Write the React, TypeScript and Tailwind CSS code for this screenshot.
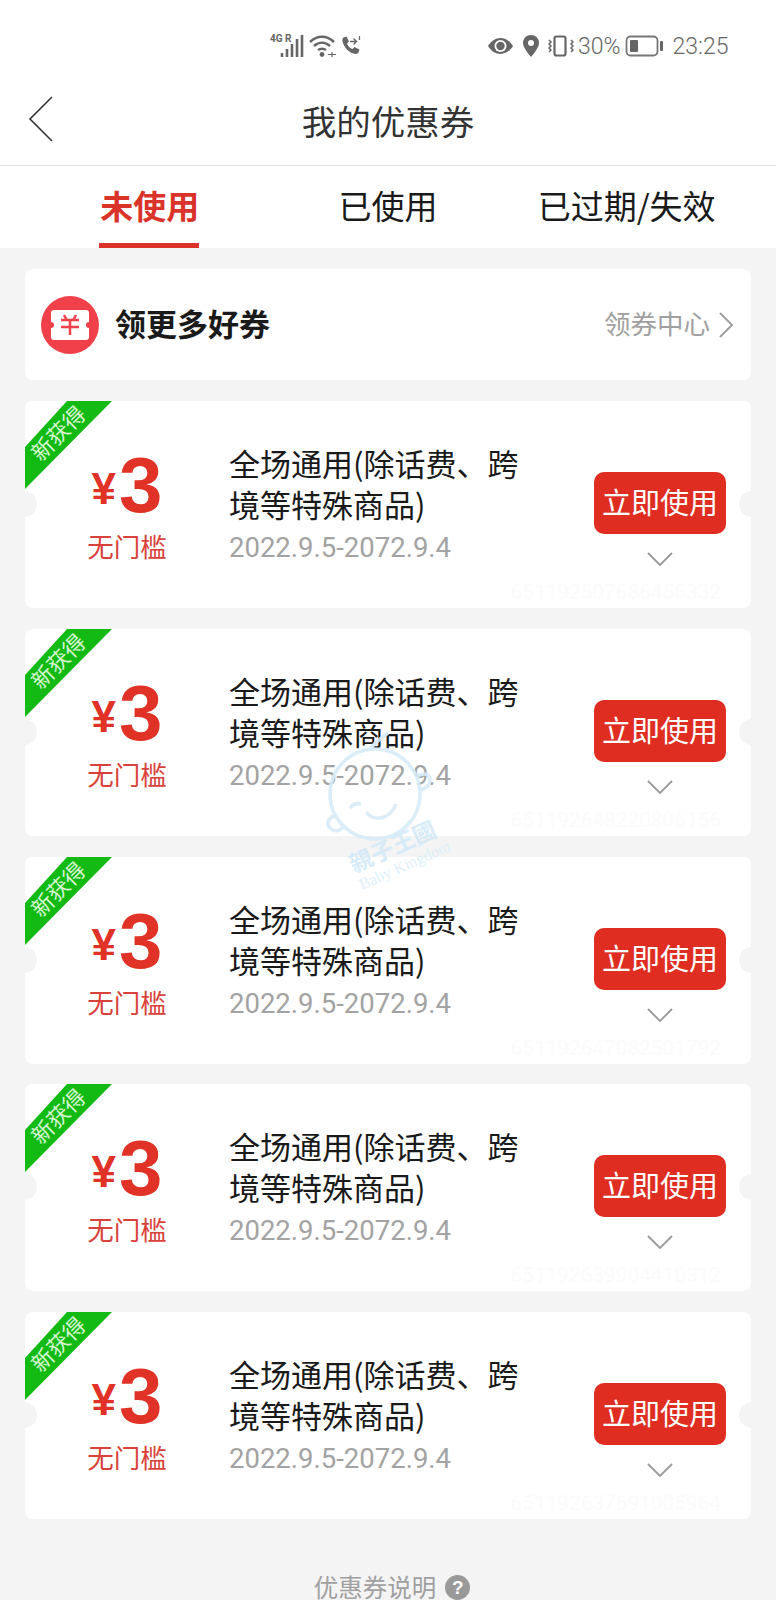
import React from "react";

const CJK = '"Noto Sans CJK SC", "Noto Sans", sans-serif';

function StatusIcons() {
  return (
    <div className="flex h-[80px] items-center pl-[269px] pt-[12px] text-[#666666]">
      <div className="relative h-[24px] w-[35px]">
        <span className="absolute left-[1px] top-[-1px] text-[10px] font-bold leading-[12px]" style={{ fontFamily: "Roboto, sans-serif" }}>
          4G R
        </span>
        <svg width="36" height="24" viewBox="0 0 36 24" className="absolute left-0 top-0">
          <path d="M13 19v4M18 15v8M23 10v13M28 5v18M33 1v22" stroke="#666" strokeWidth="2.600" fill="none" />
        </svg>
      </div>
      <svg width="28" height="24" viewBox="0 0 28 24" className="ml-[5px]" fill="none" stroke="#666" strokeWidth="2.500">
        <path d="M1 8c7-7 17-7 24 0M5 12c5-4.500 11-4.500 16 0M9 16c3-2 5-2 8 0" />
        <circle cx="13" cy="20.500" r="2.400" fill="#666" stroke="none" />
        <path d="M19 20.500h8M23 18v5" strokeWidth="1.200" />
      </svg>
      <svg width="20" height="22" viewBox="0 0 20 22" className="ml-[4px]">
        <path d="M2.500 2.500l3-1 2.500 5-2 2c.8 2.500 3 4.800 5.500 5.500l2-2 5 2.500-1 3c-1 1.300-2.500 1.800-4 1.300C8 17.500 3 12.500 1.500 6.500c-.4-1.500 0-3 1-4z" fill="#666" />
        <path d="M9 6.500h6M12.500 3.500l3 3-3 3" stroke="#666" strokeWidth="1.400" fill="none" />
        <path d="M18.500 1v4" stroke="#666" strokeWidth="1.200" />
      </svg>
      <svg width="27" height="20" viewBox="0 0 27 20" className="ml-[126px]">
        <path d="M1 10c3-5 7.500-8 12.500-8S23 5 26 10c-3 5-7.500 8-12.500 8S4 15 1 10z" fill="#666" />
        <circle cx="13.500" cy="10" r="6" fill="#fff" />
        <circle cx="13.500" cy="10" r="4.200" fill="#666" />
      </svg>
      <svg width="18" height="24" viewBox="0 0 18 24" className="ml-[8px]">
        <path d="M9 1C4.500 1 1 4.500 1 9c0 5.500 8 14 8 14s8-8.500 8-14c0-4.500-3.500-8-8-8z" fill="#666" />
        <circle cx="9" cy="9" r="3" fill="#fff" />
      </svg>
      <svg width="27" height="24" viewBox="0 0 27 24" className="ml-[7px]" fill="none" stroke="#666">
        <rect x="7.500" y="2.500" width="11" height="19" rx="2" strokeWidth="2.200" />
        <path d="M2 6l2 2-2 2 2 2-2 2 2 2-2 2M24 6l2 2-2 2 2 2-2 2 2 2-2 2" strokeWidth="1.500" />
      </svg>
      <span className="ml-[4px] text-[23px] font-light leading-none" style={{ fontFamily: "Roboto, sans-serif" }}>
        30%
      </span>
      <svg width="38" height="24" viewBox="0 0 38 24" className="ml-[4px]" fill="none">
        <rect x="1.500" y="2.500" width="31" height="19" rx="4" stroke="#777" strokeWidth="1.800" />
        <rect x="5" y="6" width="8" height="12" rx="1" fill="#666" />
        <rect x="35" y="7" width="3" height="10" rx="1" fill="#666" />
      </svg>
      <span className="ml-[10px] text-[23px] font-light leading-none" style={{ fontFamily: "Roboto, sans-serif" }}>
        23:25
      </span>
    </div>
  );
}

function Coupon({ code }: { code: string }) {
  return (
    <div className="relative flex h-[207px] rounded-[8px] bg-white">
      <svg width="87" height="88" viewBox="0 0 87 88" className="absolute left-0 top-0">
        <polygon points="42,0 87,0 0,88 0,46" fill="#14ba14" />
      </svg>
      <span className="absolute left-[-1px] top-[20px] w-[66px] -rotate-45 whitespace-nowrap text-center text-[22px] leading-[22px] text-[#d5f5d0]">
        新获得
      </span>
      <div className="absolute left-[-14px] top-[90px] h-[26px] w-[26px] rounded-full bg-[#f4f4f4]" />
      <div className="absolute right-[-14px] top-[90px] h-[26px] w-[26px] rounded-full bg-[#f4f4f4]" />
      <div className="flex w-[204px] shrink-0 flex-col items-center pt-[38px] text-[#e03226]">
        <div className="flex h-[92px] items-center">
          <span className="mr-[3px] mt-[8px] text-[44px] font-bold leading-none" style={{ fontFamily: '"Liberation Sans", sans-serif' }}>
            ¥
          </span>
          <span className="text-[78px] font-bold leading-none" style={{ fontFamily: '"Liberation Sans", sans-serif' }}>
            3
          </span>
        </div>
        <span className="mt-[-3px] text-[26.500px] leading-[36px] text-[#d9423a]">无门槛</span>
      </div>
      <div className="w-[310px] shrink-0 pt-[41px]">
        <p className="text-[31px] leading-[41px] text-[#1a1a1a]">全场通用(除话费、跨境等特殊商品)</p>
        <p className="mt-[4px] text-[27.500px] leading-[40px] text-[#a3a3a3]" style={{ fontFamily: "Roboto, sans-serif" }}>
          2022.9.5-2072.9.4
        </p>
      </div>
      <div className="ml-[55px] flex w-[132px] shrink-0 flex-col items-center pt-[71px]">
        <div className="flex h-[62px] w-[132px] items-center justify-center rounded-[10px] bg-[#e02d22] pb-[3px] text-[29px] leading-none text-white">
          立即使用
        </div>
        <svg width="26" height="14" viewBox="0 0 26 14" className="mt-[18px]" fill="none" stroke="#9a9a9a" strokeWidth="1.800">
          <path d="M1 1l12 12L25 1" />
        </svg>
        <span className="mr-[5px] mt-[13px] self-end whitespace-nowrap text-[20.800px] leading-[26px] text-[#fbfbfb]" style={{ fontFamily: "Roboto, sans-serif" }}>
          {code}
        </span>
      </div>
    </div>
  );
}

function Watermark() {
  return (
    <svg width="150" height="170" viewBox="0 0 150 170" className="pointer-events-none absolute left-[318px] top-[730px] opacity-90" fill="none" stroke="#d7ecf8" strokeWidth="3.500">
      <circle cx="57" cy="64" r="45" />
      <path d="M48 82c8 10 24 8 30-8M32 78c3-4 7-5 11-4" />
      <path d="M52 19c4-6 10-10 18-16M100 46c6-4 12-2 12 4s-6 10-12 10M16 86c-6 2-8 8-4 12s10 4 14-2" />
      <text x="36" y="143" transform="rotate(-24 36 143)" fontSize="23" fontWeight="700" fill="#d3eaf8" stroke="none" style={{ fontFamily: CJK }}>
        親子王國
      </text>
      <text x="44" y="160" transform="rotate(-24 44 160)" fontSize="16" fill="#dceffa" stroke="none" style={{ fontFamily: '"Liberation Serif", serif' }}>
        Baby Kingdom
      </text>
    </svg>
  );
}

export default function App() {
  const codes = ["651192507686456332", "651192648220806156", "651192647082501792", "651192639904410312", "651192637691005964"];
  return (
    <div className="relative h-[1600px] w-[776px] overflow-hidden bg-[#f4f4f4]" style={{ fontFamily: CJK }}>
      <div className="bg-white">
        <StatusIcons />
        <div className="relative flex h-[86px] items-center justify-center border-b border-[#e2e2e2] pb-[5px]">
          <svg width="26" height="46" viewBox="0 0 26 46" className="absolute left-[28px] top-[16px]" fill="none" stroke="#333" strokeWidth="1.600">
            <path d="M24 1L2 23l22 22" />
          </svg>
          <span className="text-[34.500px] leading-none text-[#333333]">我的优惠券</span>
        </div>
        <div className="grid h-[82px] grid-cols-3 px-[30px] pb-[4px] text-[#1a1a1a]">
          <div className="relative flex items-center justify-center pl-[1px] text-[33px] font-bold leading-none text-[#d9332a]">
            未使用
            <div className="absolute bottom-[-4px] left-1/2 h-[5px] w-[100px] -translate-x-1/2 bg-[#d9332a]" />
          </div>
          <div className="flex items-center justify-center text-[33px] leading-none">已使用</div>
          <div className="flex items-center justify-center whitespace-nowrap text-[33px] leading-none">已过期/失效</div>
        </div>
      </div>
      <div className="flex flex-col px-[25px] pt-[21px]">
        <div className="flex h-[111px] items-center rounded-[8px] bg-white pl-[16px] pr-[17px]">
          <div className="flex h-[58px] w-[58px] items-center justify-center rounded-full bg-[#f0414a]">
            <svg width="40" height="32" viewBox="0 0 40 32">
              <path d="M4 1h32a3 3 0 0 1 3 3v9a3 3 0 0 0 0 6v9a3 3 0 0 1-3 3H4a3 3 0 0 1-3-3v-9a3 3 0 0 0 0-6V4a3 3 0 0 1 3-3z" fill="#fff" />
              <path d="M14 6l2.500 4.500M26 6l-2.500 4.500M11 11h18M11 18h18M20 11v15" stroke="#f0414a" strokeWidth="2.500" fill="none" />
            </svg>
          </div>
          <span className="mb-[5px] ml-[16px] text-[31px] font-bold leading-none text-[#1a1a1a]">领更多好券</span>
          <span className="mb-[2px] ml-auto text-[26.500px] leading-none text-[#a0a0a0]">领券中心</span>
          <svg width="16" height="26" viewBox="0 0 16 26" className="ml-[8px]" fill="none" stroke="#a0a0a0" strokeWidth="2">
            <path d="M2 1l12 12L2 25" />
          </svg>
        </div>
        <div className="mt-[21px] flex flex-col gap-[20.750px]">
          {codes.map((code) => (
            <Coupon key={code} code={code} />
          ))}
        </div>
        <div className="mt-[55px] flex items-center justify-center gap-[9px] pl-[8px]">
          <span className="text-[24.500px] leading-[26px] text-[#a0a0a0]">优惠券说明</span>
          <span className="flex h-[25px] w-[25px] items-center justify-center rounded-full bg-[#999999] text-[19px] font-bold leading-none text-white" style={{ fontFamily: '"Liberation Sans", sans-serif' }}>
            ?
          </span>
        </div>
      </div>
      <Watermark />
    </div>
  );
}
